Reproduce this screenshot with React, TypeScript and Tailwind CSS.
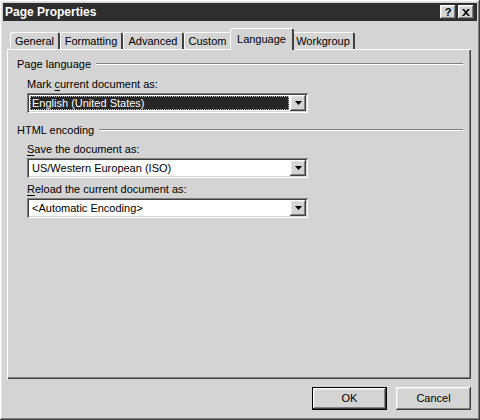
import React from 'react';

const raised =
  'shadow-[inset_-1px_-1px_0_#404040,inset_1px_1px_0_#ffffff,inset_-2px_-2px_0_#808080,inset_2px_2px_0_#e4e4e4]';
const sunken =
  'shadow-[inset_1px_1px_0_#808080,inset_-1px_-1px_0_#ffffff,inset_2px_2px_0_#404040,inset_-2px_-2px_0_#d4d4d4]';

const TABS = [
  { label: 'General', w: 'w-[50px]' },
  { label: 'Formatting', w: 'w-[63px]' },
  { label: 'Advanced', w: 'w-[61px]' },
  { label: 'Custom', w: 'w-[48px]' },
  { label: 'Language', w: 'w-[64px]', active: true },
  { label: 'Workgroup', w: 'w-[63px]' },
];

const Arrow = () => (
  <svg width="7" height="4" viewBox="0 0 7 4">
    <path d="M0 0h7L3.5 4z" fill="#000" />
  </svg>
);

const Combo: React.FC<{ value: string; focused?: boolean }> = ({ value, focused }) => (
  <div className={`ml-[10px] w-[281px] h-[20px] bg-white p-[2px] flex ${sunken}`}>
    <div className="flex-1 flex items-center pl-[1px] pr-[1px]">
      {focused ? (
        <div className="w-full h-[14px] bg-[#262626] flex items-center">
          <div className="w-full h-full border border-dotted border-[#bdbdbd] text-white leading-[12px] pl-[1px]">
            {value}
          </div>
        </div>
      ) : (
        <span className="pl-[2px] leading-[14px]">{value}</span>
      )}
    </div>
    <div className={`w-[16px] h-[16px] bg-[#d4d4d4] flex items-center justify-center ${raised}`}>
      <Arrow />
    </div>
  </div>
);

const GroupTitle: React.FC<{ label: string }> = ({ label }) => (
  <div className="flex items-center h-[14px] gap-[5px]">
    <span className="leading-[14px]">{label}</span>
    <div className="flex-1 border-t border-t-[#808080] border-b border-b-white" />
  </div>
);

const Label: React.FC<{ pre?: string; u: string; post: string }> = ({ pre = '', u, post }) => (
  <div className="pl-[10px] leading-[14px]">
    {pre}
    <span className="underline underline-offset-2">{u}</span>
    {post}
  </div>
);

const Button: React.FC<{ label: string; isDefault?: boolean }> = ({ label, isDefault }) => (
  <div
    className={`w-[75px] h-[23px] bg-[#d4d4d4] flex items-center justify-center ${
      isDefault ? 'border border-black' : ''
    }`}
  >
    <div className={`w-full h-full flex items-center justify-center ${raised}`}>{label}</div>
  </div>
);

export default function App() {
  return (
    <div
      className={`w-[480px] h-[420px] bg-[#d4d4d4] p-[3px] text-[11px] text-black font-['Liberation_Sans',Arial,sans-serif] ${raised}`}
    >
      <div className="h-[18px] bg-[#2e2e2e] flex items-center justify-between pl-[2px] pr-[3px]">
        <span className="text-white font-bold text-[12px] leading-[14px]">Page Properties</span>
        <div className="flex gap-[2px]">
          <div className={`w-[16px] h-[14px] bg-[#d4d4d4] flex items-center justify-center font-bold text-[11px] leading-none ${raised}`}>
            ?
          </div>
          <div className={`w-[16px] h-[14px] bg-[#d4d4d4] flex items-center justify-center ${raised}`}>
            <svg width="8" height="7" viewBox="0 0 8 7">
              <path d="M0 0h2l2 2.2L6 0h2L5 3.5 8 7H6L4 4.8 2 7H0l3-3.5z" fill="#000" />
            </svg>
          </div>
        </div>
      </div>

      <div className="px-[4px]">
        <div className="mt-[7px] h-[21px] flex items-end pl-[3px]">
          {TABS.map((t) => (
            <div
              key={t.label}
              className={`${t.w} relative bg-[#d4d4d4] border-t border-l border-white border-r-2 border-r-[#404040] rounded-t-[3px] text-center leading-[13px] ${
                t.active ? 'h-[22px] -mb-px -mx-[2px] z-10 pt-[4px]' : 'h-[17px] pt-[2px]'
              }`}
            >
              {t.label}
            </div>
          ))}
        </div>

        <div className="w-[464px] h-[330px] border-t border-l border-white shadow-[inset_-1px_-1px_0_#404040,inset_-2px_-2px_0_#808080] pt-[7px] pl-[9px] pr-[8px]">
          <GroupTitle label="Page language" />
          <div className="mt-[6px]">
            <Label pre="Mark " u="c" post="urrent document as:" />
          </div>
          <div className="mt-[2px]">
            <Combo value="English (United States)" focused />
          </div>

          <div className="mt-[10px]">
            <GroupTitle label="HTML encoding" />
          </div>
          <div className="mt-[5px]">
            <Label u="S" post="ave the document as:" />
          </div>
          <div className="mt-[2px]">
            <Combo value="US/Western European (ISO)" />
          </div>
          <div className="mt-[4px]">
            <Label u="R" post="eload the current document as:" />
          </div>
          <div className="mt-[2px]">
            <Combo value="<Automatic Encoding>" />
          </div>
        </div>

        <div className="w-[464px] mt-[8px] flex justify-end gap-[9px]">
          <Button label="OK" isDefault />
          <Button label="Cancel" />
        </div>
      </div>
    </div>
  );
}
